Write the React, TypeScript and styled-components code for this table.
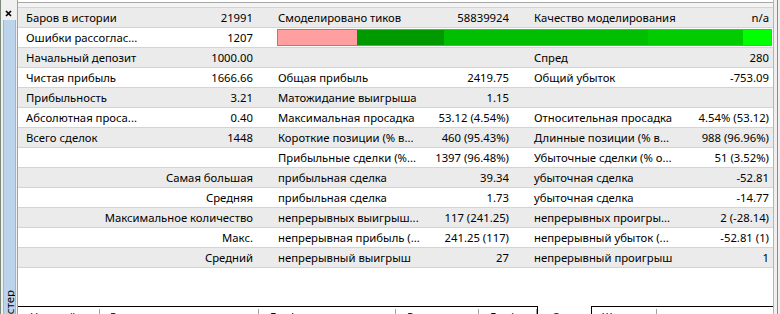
import styled, { createGlobalStyle } from 'styled-components';

const GlobalStyle = createGlobalStyle`
  html, body {
    margin: 0;
    padding: 0;
    background: #f0f0f0;
  }
  body {
    font-family: 'Noto Sans', 'Liberation Sans', sans-serif;
    font-size: 11.3px;
    color: #000;
  }
`;

const COLS = '132px 120px 155px 101px 154px 93px';

type Cell =
  | { kind: 'pair'; label?: string; value?: string }
  | { kind: 'wide'; text: string }
  | { kind: 'bar' };

const rows: Cell[][] = [
  [
    { kind: 'pair', label: 'Баров в истории', value: '21991' },
    { kind: 'pair', label: 'Смоделировано тиков', value: '58839924' },
    { kind: 'pair', label: 'Качество моделирования', value: 'n/a' },
  ],
  [{ kind: 'pair', label: 'Ошибки рассоглас...', value: '1207' }, { kind: 'bar' }],
  [
    { kind: 'pair', label: 'Начальный депозит', value: '1000.00' },
    { kind: 'pair' },
    { kind: 'pair', label: 'Спред', value: '280' },
  ],
  [
    { kind: 'pair', label: 'Чистая прибыль', value: '1666.66' },
    { kind: 'pair', label: 'Общая прибыль', value: '2419.75' },
    { kind: 'pair', label: 'Общий убыток', value: '-753.09' },
  ],
  [
    { kind: 'pair', label: 'Прибыльность', value: '3.21' },
    { kind: 'pair', label: 'Матожидание выигрыша', value: '1.15' },
    { kind: 'pair' },
  ],
  [
    { kind: 'pair', label: 'Абсолютная проса...', value: '0.40' },
    { kind: 'pair', label: 'Максимальная просадка', value: '53.12 (4.54%)' },
    { kind: 'pair', label: 'Относительная просадка', value: '4.54% (53.12)' },
  ],
  [
    { kind: 'pair', label: 'Всего сделок', value: '1448' },
    { kind: 'pair', label: 'Короткие позиции (% в...', value: '460 (95.43%)' },
    { kind: 'pair', label: 'Длинные позиции (% в...', value: '988 (96.96%)' },
  ],
  [
    { kind: 'pair' },
    { kind: 'pair', label: 'Прибыльные сделки (%...', value: '1397 (96.48%)' },
    { kind: 'pair', label: 'Убыточные сделки (% о...', value: '51 (3.52%)' },
  ],
  [
    { kind: 'wide', text: 'Самая большая' },
    { kind: 'pair', label: 'прибыльная сделка', value: '39.34' },
    { kind: 'pair', label: 'убыточная сделка', value: '-52.81' },
  ],
  [
    { kind: 'wide', text: 'Средняя' },
    { kind: 'pair', label: 'прибыльная сделка', value: '1.73' },
    { kind: 'pair', label: 'убыточная сделка', value: '-14.77' },
  ],
  [
    { kind: 'wide', text: 'Максимальное количество' },
    { kind: 'pair', label: 'непрерывных выигрыш...', value: '117 (241.25)' },
    { kind: 'pair', label: 'непрерывных проигры...', value: '2 (-28.14)' },
  ],
  [
    { kind: 'wide', text: 'Макс.' },
    { kind: 'pair', label: 'непрерывная прибыль (...', value: '241.25 (117)' },
    { kind: 'pair', label: 'непрерывный убыток (...', value: '-52.81 (1)' },
  ],
  [
    { kind: 'wide', text: 'Средний' },
    { kind: 'pair', label: 'непрерывный выигрыш', value: '27' },
    { kind: 'pair', label: 'непрерывный проигрыш', value: '1' },
  ],
];

const segments = [
  { color: '#ff9f9f', width: 79 },
  { color: '#009a00', width: 87 },
  { color: '#00bf00', width: 204 },
  { color: '#00cc00', width: 95 },
  { color: '#00ff00', width: 28 },
];

const tabs = [
  { label: 'Настройки', width: 82, pad: 12 },
  { label: 'Результаты оптимизации', width: 159, pad: 10 },
  { label: 'График оптимизации', width: 137, pad: 11 },
  { label: 'Результаты', width: 83, pad: 11 },
  { label: 'График', width: 58, pad: 11 },
];

const Window = styled.div`
  display: flex;
  width: 780px;
  height: 314px;
  overflow: hidden;
  background: #f0f0f0;
`;

const Sidebar = styled.div`
  width: 16px;
  flex: none;
  display: flex;
  flex-direction: column;
  border-left: 1px solid #7a8a7a;
  border-right: 1px solid #a0a0a0;
  background: #f0f0f0;
`;

const CloseBox = styled.div`
  height: 20px;
  flex: none;
  display: flex;
  justify-content: center;
  padding-top: 10px;
  padding-right: 2px;
  box-sizing: border-box;
`;

const Strip = styled.div`
  flex: 1;
  margin: 0 1px 0 2px;
  background: #bcd3ec;
  border-left: 1px solid #9fb5d0;
  border-right: 1px solid #9fb5d0;
  display: flex;
  flex-direction: column;
  justify-content: flex-end;
  overflow: hidden;
`;

const StripLabel = styled.span`
  writing-mode: vertical-rl;
  transform: rotate(180deg);
  margin-bottom: -13px;
  line-height: 11px;
  font-size: 11.5px;
  color: #000;
`;

const Main = styled.div`
  width: 755px;
  flex: none;
  display: flex;
  flex-direction: column;
  background: #fff;
`;

const TopStrip = styled.div`
  height: 7px;
  flex: none;
  box-sizing: border-box;
  border-top: 2px solid #fff;
  background: linear-gradient(#a8a8a8 0 1px, #f4f4f4 1px);
`;

const Table = styled.div`
  display: flex;
  flex-direction: column;
`;

const Row = styled.div<{ $shaded: boolean }>`
  display: grid;
  grid-template-columns: ${COLS};
  height: 20px;
  box-sizing: border-box;
  border-top: 1px solid #d4d4d4;
  background: ${({ $shaded }) => ($shaded ? '#ebebeb' : '#ffffff')};
  &:last-child {
    border-bottom: 1px solid #d4d4d4;
    height: 21px;
  }
`;

const Label = styled.div`
  padding-left: 8px;
  line-height: 19px;
  white-space: nowrap;
`;

const Value = styled.div<{ $last?: boolean }>`
  padding-right: ${({ $last }) => ($last ? '4px' : '17px')};
  text-align: right;
  line-height: 19px;
  white-space: nowrap;
`;

const Wide = styled.div`
  grid-column: span 2;
  padding-right: 17px;
  text-align: right;
  line-height: 19px;
  white-space: nowrap;
`;

const BarCell = styled.div`
  grid-column: span 4;
  padding: 1px 1px 1px 7px;
  display: flex;
`;

const Bar = styled.div`
  flex: 1;
  display: flex;
  border: 1px solid #3d9bff;
`;

const Segment = styled.div<{ $color: string }>`
  background: ${({ $color }) => $color};
`;

const Filler = styled.div`
  flex: 1;
`;

const TabBar = styled.div`
  height: 8px;
  flex: none;
  display: flex;
  background: #fff;
`;

const TabGroup = styled.div<{ $grow?: boolean }>`
  display: flex;
  border-top: 1px solid #000;
  flex: ${({ $grow }) => ($grow ? 1 : 'none')};
`;

const Tab = styled.div`
  box-sizing: border-box;
  padding-top: 2px;
  flex: none;
`;

const TabLabel = styled.div`
  height: 12px;
  box-sizing: border-box;
  border-right: 1px solid #a0a0a0;
  line-height: 16px;
  white-space: nowrap;
  overflow: hidden;
  color: #000;
`;

const ActiveTab = styled.div`
  width: 55px;
  flex: none;
  box-sizing: border-box;
  border-left: 1px solid #000;
  border-right: 1px solid #000;
  padding-left: 14px;
  line-height: 22px;
  white-space: nowrap;
`;

const RightEdge = styled.div`
  width: 3px;
  flex: none;
  border-left: 1px solid #b4b4b4;
  border-right: 1px solid #8a8a8a;
  background: #f0f0f0;
`;

const CloseIcon = () => (
  <svg width="7" height="7" viewBox="0 0 7 7">
    <path d="M1 1 L6 6 M6 1 L1 6" stroke="#000" strokeWidth="1.7" />
  </svg>
);

const renderCell = (cell: Cell, i: number) => {
  if (cell.kind === 'wide') return <Wide key={i}>{cell.text}</Wide>;
  if (cell.kind === 'bar')
    return (
      <BarCell key={i}>
        <Bar>
          {segments.map((s, j) => (
            <Segment key={j} $color={s.color} style={{ width: s.width }} />
          ))}
          <Filler />
        </Bar>
      </BarCell>
    );
  return [
    <Label key={`l${i}`}>{cell.label}</Label>,
    <Value key={`v${i}`} $last={i === 2}>
      {cell.value}
    </Value>,
  ];
};

export default function App() {
  return (
    <>
      <GlobalStyle />
      <Window>
        <Sidebar>
          <CloseBox>
            <CloseIcon />
          </CloseBox>
          <Strip>
            <StripLabel>Тестер</StripLabel>
          </Strip>
        </Sidebar>
        <Main>
          <TopStrip />
          <Table>
            {rows.map((cells, r) => (
              <Row key={r} $shaded={r % 2 === 0}>
                {cells.map(renderCell)}
              </Row>
            ))}
          </Table>
          <Filler />
          <TabBar>
            <TabGroup>
              {tabs.map((t) => (
                <Tab key={t.label} style={{ width: t.width }}>
                  <TabLabel style={{ paddingLeft: t.pad }}>{t.label}</TabLabel>
                </Tab>
              ))}
            </TabGroup>
            <ActiveTab>Отчет</ActiveTab>
            <TabGroup $grow>
              <Tab style={{ width: 65 }}>
                <TabLabel style={{ paddingLeft: 10 }}>Журнал</TabLabel>
              </Tab>
            </TabGroup>
          </TabBar>
        </Main>
        <RightEdge />
      </Window>
    </>
  );
}
